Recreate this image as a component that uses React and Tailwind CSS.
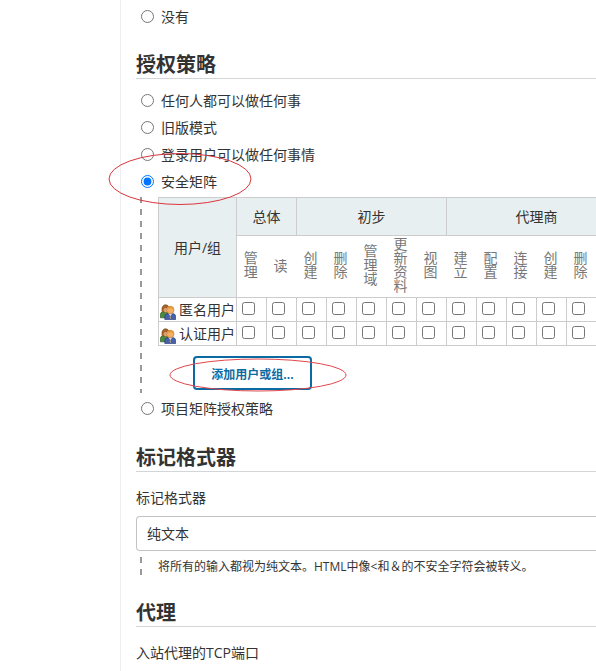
import { useState } from 'react'

const STRATEGIES = [
  { id: 'anyone', label: '任何人都可以做任何事' },
  { id: 'legacy', label: '旧版模式' },
  { id: 'logged-in', label: '登录用户可以做任何事情' },
  { id: 'matrix', label: '安全矩阵', marked: true },
]

const GROUPS = [
  { name: '总体', permissions: ['管理', '读'] },
  { name: '初步', permissions: ['创建', '删除', '管理域', '更新资料', '视图'] },
  { name: '代理商', permissions: ['建立', '配置', '连接', '创建', '删除', ''] },
]

const USERS = ['匿名用户', '认证用户']

function SectionTitle({ children }) {
  return (
    <h2 className="border-b border-[#d3d6d8] pt-0.5 text-xl leading-[26px] font-bold text-[#333]">
      {children}
    </h2>
  )
}

function RadioRow({ name, label, marked, ...props }) {
  return (
    <label className="flex h-[27px] items-center pl-[5px]">
      <input type="radio" name={name} className="m-0 size-[13px]" {...props} />
      <span className="relative ml-[7px] leading-5">
        {label}
        {marked && (
          <svg
            className="pointer-events-none absolute -top-5 -left-[53px] h-[53px] w-36 max-w-none"
            viewBox="0 0 144 53"
            fill="none"
            stroke="#d9363e"
          >
            <ellipse cx="72" cy="27" rx="71" ry="25.5" />
          </svg>
        )}
      </span>
    </label>
  )
}

function Dashes() {
  return (
    <div className="ml-1 w-0.5 shrink-0 bg-[repeating-linear-gradient(to_bottom,#999_0px,#999_6px,transparent_6px,transparent_12px)]" />
  )
}

function UsersIcon() {
  return (
    <svg className="mt-1 size-4 shrink-0" viewBox="0 0 16 16">
      <path d="M0.4 13.8V10.8C0.4 8.6 1.8 7.6 3.8 7.6H8V13.8Z" fill="#4b8a3a" stroke="#2a5a25" strokeWidth="0.7" />
      <path d="M2.2 7.6C1.2 3.5 3 0.8 5.6 0.8C7.8 0.8 9 2.5 9 4.5V8H3.5Z" fill="#a5622f" stroke="#7a4520" strokeWidth="0.6" />
      <path d="M3.6 5.2C4.6 3.8 6 3.8 7.5 4.6V8L5.4 8.4L3.8 7.2Z" fill="#e0a36c" />
      <path d="M4.8 15.6V12.8C4.8 10.6 6.4 9.6 8.6 9.6H12.2C14.4 9.6 15.7 10.8 15.7 12.8V15.6Z" fill="#4560ac" stroke="#2a3c80" strokeWidth="0.7" />
      <path d="M8.6 9.6L10.3 12.2L12.2 9.6Z" fill="#dfe6f5" />
      <path d="M10.3 11L11 14L10.3 15L9.6 14Z" fill="#b9a76a" />
      <circle cx="10.4" cy="6" r="3.7" fill="#f2b066" stroke="#c97a30" strokeWidth="0.6" />
      <path d="M6.8 5.4C7 1.4 13.6 1.2 14 5.4C12.4 4 9.2 4 6.8 5.4Z" fill="#e59436" />
    </svg>
  )
}

function PermissionMatrix() {
  return (
    <table className="w-[469px] table-fixed border-collapse">
      <colgroup>
        <col className="w-[78px]" />
        {GROUPS.flatMap(g => g.permissions.map(p => <col key={g.name + p} className="w-[30px]" />))}
      </colgroup>
      <thead>
        <tr className="h-[38px] bg-[#e8eff0]">
          <th rowSpan={2} className="border border-[#ccc] p-0 font-normal">用户/组</th>
          {GROUPS.map(g => (
            <th key={g.name} colSpan={g.permissions.length} className="border border-[#ccc] p-0 font-normal">
              {g.name}
            </th>
          ))}
        </tr>
        <tr className="h-[62px]">
          {GROUPS.map(g =>
            g.permissions.map(p => (
              <th key={g.name + p} className="p-0 pr-1 pb-1 font-normal text-[#777]">
                <span className="inline-block align-middle leading-4 [writing-mode:vertical-rl]">{p}</span>
              </th>
            ))
          )}
        </tr>
      </thead>
      <tbody>
        {USERS.map(user => (
          <tr key={user} className="h-6">
            <td className="border border-[#ccc] p-0">
              <div className="flex h-[23px] items-center gap-[3px] pl-px whitespace-nowrap">
                <UsersIcon />
                {user}
              </div>
            </td>
            {GROUPS.map(g =>
              g.permissions.map(p => (
                <td key={g.name + p} className="border border-[#ccc] p-0 pb-0.5">
                  <input
                    type="checkbox"
                    aria-label={`${user} ${g.name} ${p}`}
                    className="ml-[5px] block size-[13px]"
                  />
                </td>
              ))
            )}
          </tr>
        ))}
      </tbody>
    </table>
  )
}

export default function App() {
  const [strategy, setStrategy] = useState('matrix')

  return (
    <div className="flex min-h-screen overflow-hidden bg-white font-['Open_Sans','Noto_Sans_CJK_SC',sans-serif] text-sm text-[#333]">
      <aside className="w-[120px] shrink-0" />
      <main className="min-w-0 flex-1 border-l border-[#eee] pt-[3px] pb-[7px] pl-[15px]">
        <RadioRow name="realm" label="没有" />

        <section className="mt-5">
          <SectionTitle>授权策略</SectionTitle>
          <div className="mt-2">
            {STRATEGIES.map(s => (
              <RadioRow
                key={s.id}
                name="strategy"
                label={s.label}
                marked={s.marked}
                checked={strategy === s.id}
                onChange={() => setStrategy(s.id)}
              />
            ))}
          </div>
          <div className="mt-0.5 mb-0.5 flex h-[196px]">
            <Dashes />
            <div className="ml-4">
              <PermissionMatrix />
              <div className="relative mt-2.5 ml-[35px] w-fit">
                <button
                  type="button"
                  className="block h-[34px] w-[119px] rounded border-2 border-[#0b6aa2] bg-white pt-1 text-xs font-bold text-[#0b6aa2]"
                >
                  添加用户或组...
                </button>
                <svg
                  className="pointer-events-none absolute top-0.5 -left-6 h-[34px] w-[178px] max-w-none"
                  viewBox="0 0 178 34"
                  fill="none"
                  stroke="#e0474c"
                >
                  <ellipse cx="89" cy="17" rx="88" ry="16" />
                </svg>
              </div>
            </div>
          </div>
          <RadioRow
            name="strategy"
            label="项目矩阵授权策略"
            checked={strategy === 'project'}
            onChange={() => setStrategy('project')}
          />
        </section>

        <section className="mt-[21px]">
          <SectionTitle>标记格式器</SectionTitle>
          <label htmlFor="formatter" className="mt-4 block leading-5">标记格式器</label>
          <select
            id="formatter"
            className="mt-2 block h-[35px] w-full appearance-none rounded-l border border-r-0 border-[#c3c3c3] bg-white px-2.5"
          >
            <option>纯文本</option>
          </select>
          <div className="mt-1.5 flex">
            <Dashes />
            <p className="ml-4 pt-px text-xs leading-[18px] whitespace-nowrap">
              将所有的输入都视为纯文本。HTML中像&lt;和＆的不安全字符会被转义。
            </p>
          </div>
        </section>

        <section className="mt-[22px]">
          <SectionTitle>代理</SectionTitle>
          <p className="mt-4 leading-5">入站代理的TCP端口</p>
        </section>
      </main>
    </div>
  )
}
